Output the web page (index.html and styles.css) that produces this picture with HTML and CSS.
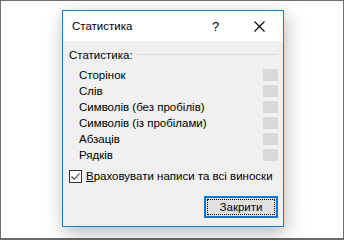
FILE: index.html
```html
<!DOCTYPE html>
<html>
<head>
<meta charset="utf-8">
<link rel="stylesheet" href="styles.css">
</head>
<body>
<div class="frame">
  <div class="dialog">
    <div class="titlebar">
      <span class="title">Статистика</span>
      <span class="help">?</span>
      <svg class="close" width="11" height="11" viewBox="0 0 11 11"><path d="M0.5 0.5 L10.5 10.5 M10.5 0.5 L0.5 10.5" stroke="#000" stroke-width="1.1" fill="none"/></svg>
    </div>
    <div class="body">
      <div class="group-head">
        <span class="group-label">Статистика:</span>
        <span class="group-line"></span>
      </div>
      <div class="rows">
        <div class="row"><span>Сторінок</span><span class="val"></span></div>
        <div class="row"><span>Слів</span><span class="val"></span></div>
        <div class="row"><span>Символів (без пробілів)</span><span class="val"></span></div>
        <div class="row"><span>Символів (із пробілами)</span><span class="val"></span></div>
        <div class="row"><span>Абзаців</span><span class="val"></span></div>
        <div class="row"><span>Рядків</span><span class="val"></span></div>
      </div>
      <label class="check">
        <span class="box"><svg width="11" height="11" viewBox="0 0 11 11"><path d="M1.5 5.5 L4.3 8.3 L9.5 2.5" stroke="#333" stroke-width="1.1" fill="none"/></svg></span>
        <span><u>В</u>раховувати написи та всі виноски</span>
      </label>
      <div class="actions">
        <button class="btn"><span class="focus">Закрити</span></button>
      </div>
    </div>
  </div>
</div>
</body>
</html>
```
FILE: styles.css
```css
html, body {
  margin: 0;
  padding: 0;
  background: #fff;
}
body {
  font-family: "Liberation Sans", Arial, sans-serif;
  font-size: 11.5px;
  color: #000;
}
.frame {
  border: 1px solid #707070;
  border-bottom: 2px solid #6a6a6a;
  padding: 9px 0 0 61px;
  box-sizing: content-box;
  width: 281px;
  height: 228px;
}
.dialog {
  width: 220px;
  height: 215px;
  border: 1px solid #1a7fd4;
  background: #f0f0f0;
  box-shadow: 2px 6px 18px rgba(0,0,0,0.28);
  display: flex;
  flex-direction: column;
}
.titlebar {
  height: 30px;
  background: #fff;
  display: flex;
  align-items: center;
  padding-left: 9px;
}
.title {
  flex: 1;
  margin-top: -1px;
}
.help {
  width: 10px;
  margin-right: 32px;
  font-size: 13px;
}
.close {
  margin-right: 18px;
}
.body {
  flex: 1;
  padding: 6px 5px 0 6px;
  display: flex;
  flex-direction: column;
}
.group-head {
  display: flex;
  align-items: center;
  height: 16px;
}
.group-line {
  flex: 1;
  height: 1px;
  background: #dcdcdc;
  margin-left: 4px;
  margin-top: -1px;
}
.rows {
  padding-left: 10px;
  margin-top: 4px;
}
.row {
  display: flex;
  justify-content: space-between;
  align-items: center;
  height: 16px;
}
.val {
  width: 15px;
  height: 12px;
  background: #d9d9d9;
}
.check {
  display: flex;
  align-items: center;
  margin-top: 5px;
  height: 16px;
}
.box {
  width: 11px;
  height: 11px;
  border: 1px solid #333;
  background: #fff;
  margin-right: 4px;
  display: flex;
}
.actions {
  display: flex;
  justify-content: flex-end;
  margin-top: 12px;
}
.btn {
  width: 74px;
  height: 22px;
  border: 2px solid #0078d7;
  background: #e1e1e1;
  padding: 1px;
  font: inherit;
  color: #000;
  display: flex;
}
.focus {
  flex: 1;
  border: 1px dotted #000;
  display: flex;
  align-items: center;
  justify-content: center;
}
```
